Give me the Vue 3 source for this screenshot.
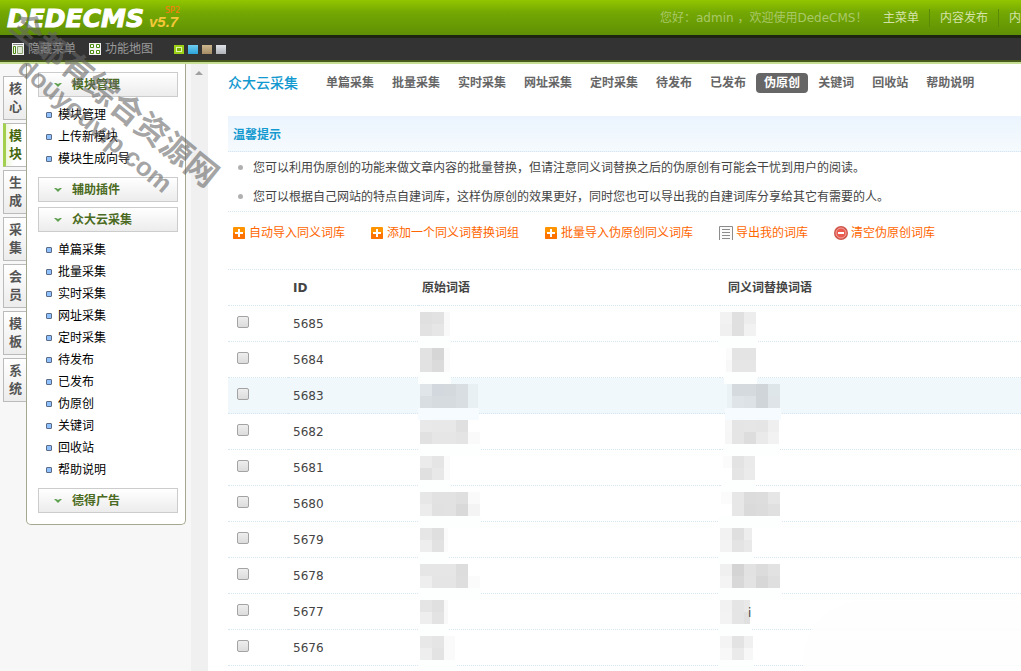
<script setup>
import { ref } from 'vue'

const tabs = ['核心', '模块', '生成', '采集', '会员', '模板', '系统']
const activeTab = ref('模块')

const groups = [
  { title: '模块管理', items: ['模块管理', '上传新模块', '模块生成向导'] },
  { title: '辅助插件', items: [] },
  {
    title: '众大云采集',
    items: ['单篇采集', '批量采集', '实时采集', '网址采集', '定时采集', '待发布', '已发布', '伪原创', '关键词', '回收站', '帮助说明'],
  },
  { title: '德得广告', items: [] },
]

const links = ['单篇采集', '批量采集', '实时采集', '网址采集', '定时采集', '待发布', '已发布', '伪原创', '关键词', '回收站', '帮助说明']
const activeLink = '伪原创'

const tips = [
  '您可以利用伪原创的功能来做文章内容的批量替换，但请注意同义词替换之后的伪原创有可能会干忧到用户的阅读。',
  '您可以根据自己网站的特点自建词库，这样伪原创的效果更好，同时您也可以导出我的自建词库分享给其它有需要的人。',
]

const actions = [
  { icon: 'add', text: '自动导入同义词库' },
  { icon: 'add', text: '添加一个同义词替换词组' },
  { icon: 'add', text: '批量导入伪原创同义词库' },
  { icon: 'list', text: '导出我的词库' },
  { icon: 'remove', text: '清空伪原创词库' },
]

// Each censored word is a two-line strip of 12px blocks, cut at `from` and `to`.
const block = (from, to, top, bottom) => {
  const cells = []
  ;[top, bottom].forEach((line, r) => {
    line.split(' ').forEach((c, i) => {
      if (c === '-') return
      const x = Math.max(i * 12, from)
      const end = Math.min(i * 12 + 12, to)
      cells.push({ x, y: r * 12, w: end - x, fill: '#' + (c.length === 2 ? c + c + c : c) })
    })
  })
  return { from, to, cells }
}

const rows = [
  { id: 5685, a: block(0, 30, 'e0 e2 f9', 'e2 e6 f9'), b: block(0, 36, 'f2 e0 ed', 'f0 e0 f2') },
  { id: 5684, a: block(0, 30, 'e2 d6 fb', 'e2 db fb'), b: block(6, 36, 'fb e4 e4', 'f8 e6 e6') },
  {
    id: 5683,
    active: true,
    a: block(0, 58, 'dfe5e8 d2d8dd d4d9dd d9dee2 e8f0f3', 'd8dee2 d6dbdf d6dbdf d9dee2 e8f0f3'),
    b: block(7, 60, 'eaf2f5 d5dadf d5dadf d0d5d9 dfe6ea', 'eaf2f5 dfe4e9 dde2e7 cfd5d9 dfe4e9'),
  },
  { id: 5682, a: block(0, 60, 'e9 e8 e8 e0 -', 'e1 e6 e6 e4 fa'), b: block(5, 59, 'f7 e5 e6 e5 ef', 'f6 e5 dd ea f2') },
  { id: 5681, a: block(0, 30, 'eb e5 fb', 'e0 e8 fb'), b: block(3, 35, 'fb e3 ea', '- e5 eb') },
  { id: 5680, a: block(0, 60, 'e7 e2 e2 df fa', 'ec e1 e2 d9 f4'), b: block(1, 60, 'fb e7 dc dd e6', '- e7 da dc e0') },
  { id: 5679, a: block(0, 28, 'e6 df fb', 'ee e2 fb'), b: block(0, 32, 'f2 df ed', 'f3 e4 e9') },
  { id: 5678, a: block(0, 60, 'e6 e6 e6 dd -', 'ee e5 e5 de fb'), b: block(0, 60, 'f0 d4 e2 dc e2', 'f4 d8 e3 d7 df') },
  { id: 5677, a: block(0, 28, 'e5 e0 f9', 'ee e3 f9'), b: block(0, 30, 'f2 e5 e9', 'f3 e5 e0'), tail: 'i' },
  { id: 5676, a: block(0, 35, 'e8 e5 fa', 'ee e3 fa'), b: block(0, 33, 'f4 e3 f0', 'f8 ea f7') },
]
</script>

<template>
  <div class="page">
    <header class="top">
      <svg class="logo" width="190" height="35" viewBox="0 0 190 35" role="img" aria-label="DEDECMS v5.7 SP2">
        <text class="logo-name" x="7" y="27">DEDECMS</text>
        <text class="logo-ver" x="149" y="27">v5.7</text>
        <text class="logo-sp" x="165" y="13">SP2</text>
      </svg>
      <nav class="top-nav">
        <span class="hello">您好：admin ，欢迎使用DedeCMS！</span>
        <a href="#">主菜单</a>
        <a href="#">内容发布</a>
        <a href="#">内</a>
      </nav>
    </header>

    <div class="tools">
      <button type="button" class="tool">
        <svg width="12" height="12" viewBox="0 0 12 12">
          <path fill="#f2f2f2" d="M0 0h12v12H0z" />
          <path fill="#888" d="M1 1h10v1H1z" />
          <path fill="none" stroke="#4d8a10" d="M1.500 3.500h2v7h-2z" />
          <path fill="#dfe8d4" stroke="#8aa573" d="M5.500 3.500h5v7h-5z" />
        </svg>
        <span>隐藏菜单</span>
      </button>
      <button type="button" class="tool">
        <svg width="12" height="12" viewBox="0 0 12 12">
          <path fill="#f2f2f2" d="M0 0h12v12H0z" />
          <path fill="#fff" stroke="#4d8a10" d="M1.500 1.500h3v3h-3zM7.500 1.500h3v3h-3zM1.500 7.500h3v3h-3zM7.500 7.500h3v3h-3z" />
        </svg>
        <span>功能地图</span>
      </button>
      <div class="skins">
        <button type="button" class="skin green" aria-label="绿色"></button>
        <button type="button" class="skin blue" aria-label="蓝色"></button>
        <button type="button" class="skin brown" aria-label="棕色"></button>
        <button type="button" class="skin gray" aria-label="灰色"></button>
      </div>
    </div>

    <div class="body">
      <aside class="side">
        <div class="tabs">
          <button
            v-for="t in tabs"
            :key="t"
            type="button"
            class="tab"
            :class="{ on: t === activeTab }"
            @click="activeTab = t"
          >{{ t }}</button>
        </div>
        <div class="panel">
          <section v-for="g in groups" :key="g.title">
            <button type="button" class="group">
              <svg width="8" height="6" viewBox="0 0 8 6">
                <path fill="#5fa050" d="M0 1h2l2 1 2-1h2L4 5z" />
              </svg>
              <span>{{ g.title }}</span>
            </button>
            <ul v-if="g.items.length" class="items">
              <li v-for="i in g.items" :key="i"><a href="#">{{ i }}</a></li>
            </ul>
          </section>
        </div>
        <div class="scroll">
          <svg width="8" height="4" viewBox="0 0 8 4"><path fill="#a0a0a0" d="M0 4l4-4 4 4z" /></svg>
        </div>
      </aside>

      <main class="main">
        <div class="bar">
          <h1>众大云采集</h1>
          <nav class="links">
            <a v-for="l in links" :key="l" href="#" :class="{ on: l === activeLink }">{{ l }}</a>
          </nav>
        </div>

        <h2>温馨提示</h2>
        <ul class="tips">
          <li v-for="t in tips" :key="t">{{ t }}</li>
        </ul>

        <div class="actions">
          <a v-for="a in actions" :key="a.text" href="#" :class="a.icon">
            <svg v-if="a.icon === 'add'" width="12" height="12" viewBox="0 0 12 12">
              <rect width="12" height="12" rx="1" fill="#ff9400" />
              <path fill="#fd7200" d="M0 6h12v5a1 1 0 0 1-1 1H1a1 1 0 0 1-1-1z" />
              <path fill="#fff" d="M5 2h2v3h3v2H7v3H5V7H2V5h3z" />
            </svg>
            <svg v-else-if="a.icon === 'list'" width="14" height="14" viewBox="0 0 14 14">
              <path fill="#fafafa" stroke="#8c8c8c" d="M.5 14V.5h13V14" />
              <path stroke="#8c8c8c" d="M3 3.500h8M3 6.500h8M3 9.500h8M3 12.500h8" />
            </svg>
            <svg v-else width="14" height="14" viewBox="0 0 14 14">
              <circle cx="7" cy="7" r="7" fill="#d0564c" />
              <circle cx="7" cy="7" r="5" fill="#ea5a4e" stroke="#f3a79f" />
              <path fill="#fff" d="M4 6h6v2H4z" />
            </svg>
            <span>{{ a.text }}</span>
          </a>
        </div>

        <table>
          <colgroup>
            <col class="c-check" />
            <col class="c-id" />
            <col class="c-word" />
            <col />
          </colgroup>
          <thead>
            <tr>
              <th></th>
              <th class="id">ID</th>
              <th class="w1">原始词语</th>
              <th class="w2">同义词替换词语</th>
            </tr>
          </thead>
          <tbody>
            <tr v-for="r in rows" :key="r.id" :class="{ active: r.active }">
              <td class="check"><input type="checkbox" :aria-label="'选择 ' + r.id" /></td>
              <td class="id">{{ r.id }}</td>
              <td v-for="(m, k) in [r.a, r.b]" :key="k" class="word">
                <svg width="60" height="24" viewBox="0 0 60 24">
                  <rect :x="m.from - 2" y="24" :width="m.to - m.from + 3" height="12" :fill="r.active ? '#f6fbff' : '#fdfffe'" />
                  <rect v-for="(c, i) in m.cells" :key="i" :x="c.x" :y="c.y" :width="c.w" height="12" :fill="c.fill" />
                  <text v-if="k === 1 && r.tail" class="tail" x="28" y="17">{{ r.tail }}</text>
                </svg>
              </td>
            </tr>
          </tbody>
        </table>
        <div class="fade"></div>
      </main>
    </div>

    <svg class="mark" width="240" height="210" viewBox="0 0 240 210">
      <text class="mark-cn" transform="translate(115 99) rotate(39)" dy="12">全都有综合资源网</text>
      <text class="mark-en" transform="translate(94 127) rotate(40)" dy="7">douyouvip.com</text>
    </svg>
  </div>
</template>

<style>
body {
  margin: 0;
  background: #fff;
}
</style>

<style scoped>
.page {
  position: relative;
  display: flex;
  flex-direction: column;
  min-height: 100vh;
  overflow: hidden;
  font: 12px/18px "DejaVu Sans", "Noto Sans CJK SC", sans-serif;
  color: #444;
}
a {
  color: inherit;
  text-decoration: none;
}
button {
  font: inherit;
  color: inherit;
  cursor: pointer;
}
ul {
  margin: 0;
  padding: 0;
  list-style: none;
}
svg {
  display: block;
  flex: none;
}

.top {
  display: flex;
  justify-content: space-between;
  height: 35px;
  background: linear-gradient(#92c600, #74a803 35%, #5f9005);
}
.logo-name {
  font: italic bold 25px "DejaVu Sans", sans-serif;
  fill: #fff;
  stroke: #fff;
  stroke-width: 1px;
}
.logo-ver {
  font: italic bold 15px "Liberation Sans", sans-serif;
  fill: #f5c83a;
}
.logo-sp {
  font: 8px "DejaVu Sans", sans-serif;
  fill: #ff7a10;
}
.top-nav {
  display: flex;
  align-items: center;
  width: 361px;
  overflow: hidden;
  white-space: nowrap;
  color: #d3e3a8;
}
.hello {
  flex: none;
  width: 213px;
  color: #a9c868;
}
.top-nav a {
  flex: none;
  padding: 0 10px;
}
.top-nav a + a {
  border-left: 1px solid #5a8a06;
}

.tools {
  display: flex;
  align-items: center;
  height: 22px;
  padding-left: 12px;
  background: #333;
  border-top: 3px solid #1e2412;
  border-bottom: 2px solid #48591c;
  box-shadow: 0 2px #c6dd94;
  color: #999;
}
.tool {
  display: flex;
  align-items: center;
  gap: 4px;
  margin-right: 13px;
  padding: 0;
  border: 0;
  background: none;
}
.skins {
  display: flex;
  gap: 4px;
  padding-left: 8px;
}
.skin {
  box-sizing: border-box;
  width: 10px;
  height: 9px;
  padding: 0;
  border: 0;
}
.skin.green {
  border: 2px solid #9bd016;
  background: #7ab000;
  box-shadow: inset 0 0 0 1px #e4f3b4;
}
.blue {
  background: linear-gradient(#6fcdf0, #2ba3d8);
}
.brown {
  background: linear-gradient(#cdb78d, #a58c66);
}
.gray {
  background: linear-gradient(#dfe2e6, #b0b4b9);
}

.body {
  display: flex;
  flex: 1;
  padding-top: 2px;
}
.side {
  display: flex;
  align-items: flex-start;
  flex: none;
  width: 208px;
  background: #f7f7f7;
}
.tabs {
  display: flex;
  flex-direction: column;
  gap: 3px;
  width: 23px;
  padding: 12px 0 0 3px;
}
.tab {
  height: 44px;
  padding: 3px 4px 3px 5px;
  border: 1px solid #bbb;
  border-right: 0;
  background: linear-gradient(#fff, #ececec);
  font-weight: bold;
  font-size: 13px;
  line-height: 18px;
  word-break: break-all;
  color: #555;
}
.tab.on {
  padding-left: 3px;
  border-left: 3px solid #a2cf4e;
  background: linear-gradient(90deg, #eef7dc, #fff 40%);
  color: #46660e;
}
.panel {
  box-sizing: border-box;
  width: 160px;
  padding: 8px 7px 6px 11px;
  background: #fff;
  border: 1px solid #a5a88e;
  border-top: 0;
  border-radius: 0 0 5px 5px;
}
.group {
  display: flex;
  align-items: center;
  gap: 10px;
  width: 140px;
  height: 25px;
  margin-bottom: 5px;
  padding: 0 15px;
  border: 1px solid #ccc;
  background: linear-gradient(#fff, #ececec);
  font-weight: bold;
  line-height: 20px;
  color: #4b6b22;
}
.items {
  padding: 2px 0 7px;
}
.items li {
  display: flex;
  align-items: center;
  gap: 6px;
  height: 22px;
  padding-left: 8px;
  color: #000;
}
.items li::before {
  content: "";
  box-sizing: border-box;
  width: 6px;
  height: 6px;
  border: 1px solid #5a6b85;
  border-radius: 1px;
  background: #8fc0ff;
}
.scroll {
  align-self: stretch;
  width: 17px;
  margin-left: auto;
  padding-top: 7px;
  background: #f0f0f0;
}
.scroll svg {
  margin-left: 4px;
}

.main {
  position: relative;
  flex: 1;
  min-width: 0;
  padding-left: 20px;
}
.bar {
  display: flex;
  align-items: center;
  height: 38px;
  margin-bottom: 14px;
  white-space: nowrap;
}
h1 {
  width: 89px;
  margin: 0;
  font-size: 14px;
  font-weight: 500;
  line-height: 20px;
  color: #1299cf;
}
.links {
  display: flex;
}
.links a {
  margin: 0 1px;
  padding: 0 8px;
  border-radius: 4px;
  font-weight: bold;
  line-height: 20px;
  color: #666;
}
.links a.on {
  background: #666;
  color: #fff;
}
h2 {
  margin: 0;
  padding: 3px 0 0 5px;
  border-bottom: 1px dotted #d4e6f2;
  background: linear-gradient(#ebf4fe, #f5fafd);
  font-size: 12px;
  line-height: 32px;
  color: #1299cf;
}
.tips {
  padding-top: 1px;
  border-bottom: 1px dotted #d4e6f2;
}
.tips li {
  display: flex;
  align-items: center;
  gap: 10px;
  height: 29px;
  padding-left: 10px;
  white-space: nowrap;
}
.tips li::before {
  content: "";
  width: 5px;
  height: 5px;
  border-radius: 50%;
  background: #b0b0b0;
}
.actions {
  display: flex;
  gap: 26px;
  align-items: center;
  height: 42px;
  margin-bottom: 15px;
  padding-left: 5px;
  white-space: nowrap;
  color: #ff6600;
}
.actions a {
  display: flex;
  align-items: center;
  gap: 3px;
}
.actions a.add {
  gap: 4px;
}

table {
  width: 100%;
  table-layout: fixed;
  border-spacing: 0;
  border-top: 1px dotted #d4e6f2;
}
.c-check {
  width: 60px;
}
.c-id {
  width: 130px;
}
.c-word {
  width: 302px;
}
th,
td {
  box-sizing: border-box;
  height: 36px;
  padding: 0 5px;
  border-bottom: 1px dotted #d4e6f2;
  text-align: left;
}
th.w1 {
  padding-left: 4px;
}
th.w2 {
  padding-left: 8px;
}
.active td {
  background: #f0f8fc;
}
td.check {
  padding: 0 9px 3px;
  line-height: 12px;
}
input {
  display: block;
  appearance: none;
  box-sizing: border-box;
  width: 12px;
  height: 12px;
  margin: 0;
  border: 1px solid #a3a3a3;
  border-radius: 2px;
  background: linear-gradient(#eee, #dcdcdc);
}
td.word {
  padding: 1px 2px 0;
}
td.word + td.word {
  padding-left: 0;
}
.word svg {
  position: relative;
  overflow: visible;
}
.tail {
  font-size: 12px;
  fill: #444;
}
.fade {
  position: absolute;
  right: 0;
  bottom: 0;
  width: 218px;
  height: 70px;
  border-radius: 60px 0 0 0;
  background: #fefefe;
  opacity: 0.85;
}

.mark {
  position: absolute;
  top: 0;
  left: 0;
  pointer-events: none;
}
.mark text {
  text-anchor: middle;
  font-weight: bold;
  fill: #686868;
  fill-opacity: 0.6;
}
.mark-cn {
  font-family: "Noto Sans CJK SC", sans-serif;
  font-size: 32px;
}
.mark-en {
  font-family: "Liberation Sans", sans-serif;
  font-size: 26px;
}
</style>
